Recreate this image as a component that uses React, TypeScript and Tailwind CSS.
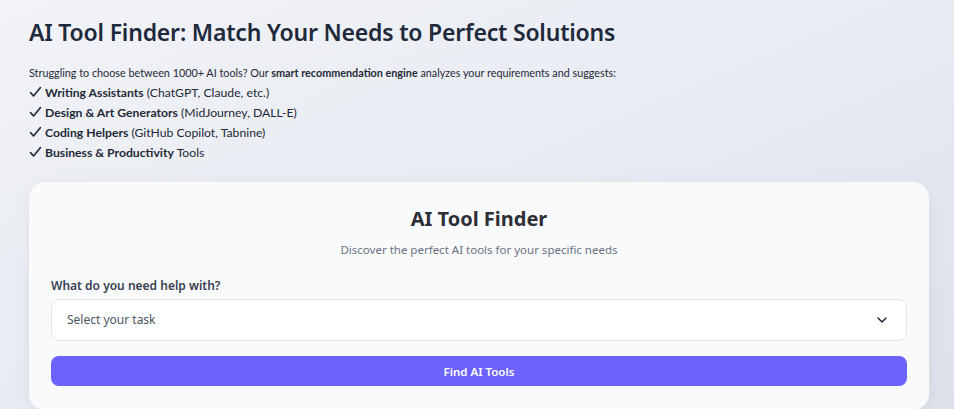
import { ChevronDown } from 'lucide-react'

const ITEMS = [
  { bold: 'Writing Assistants', rest: ' (ChatGPT, Claude, etc.)' },
  { bold: 'Design & Art Generators', rest: ' (MidJourney, DALL-E)' },
  { bold: 'Coding Helpers', rest: ' (GitHub Copilot, Tabnine)' },
  { bold: 'Business & Productivity', rest: ' Tools' },
]

function Check() {
  return (
    <svg width="13" height="12" viewBox="0 0 13 12" fill="none" className="mr-[3px] inline-block align-[-1px]">
      <path d="M1.5 6.5 4.5 10 11.5 1.5" stroke="#1f2937" strokeWidth="1.6" strokeLinecap="round" strokeLinejoin="round" />
    </svg>
  )
}

export default function App() {
  return (
    <div
      className="min-h-screen w-full bg-gradient-to-br from-[#f1f3f7] via-[#e8ebf2] to-[#dce1eb] px-[29px] pt-[16px] text-[#1f2937]"
      style={{ fontFamily: '"Noto Sans", "Open Sans", sans-serif' }}
    >
      <h1 className="text-[23px] font-semibold leading-8 tracking-[-0.2px] text-[#1e293b]">
        AI Tool Finder: Match Your Needs to Perfect Solutions
      </h1>

      <div className="mt-[15px] text-[10.8px] leading-5 text-[#1f2937]" style={{ fontFamily: 'Lato, "Noto Sans", sans-serif' }}>
        <p>
          Struggling to choose between 1000+ AI tools? Our <strong className="font-bold">smart recommendation engine</strong>{' '}
          analyzes your requirements and suggests:
        </p>
        {ITEMS.map((it) => (
          <p key={it.bold} className="text-[12.2px]">
            <Check />
            <strong className="font-bold">{it.bold}</strong>
            {it.rest}
          </p>
        ))}
      </div>

      <div className="mt-[19px] w-[900px] rounded-2xl bg-[#f9fafc] px-[22px] pt-[23px] pb-6 shadow-[0_4px_20px_rgba(15,23,42,0.06)]">
        <h2 className="text-center text-xl font-bold leading-7 text-[#2d2f36]">AI Tool Finder</h2>
        <p className="mt-[8px] text-center text-[11.5px] text-[#6b7280]">Discover the perfect AI tools for your specific needs</p>

        <label className="mt-[20px] block text-xs font-semibold text-[#374151]">What do you need help with?</label>
        <div className="mt-[5px] flex h-[42px] items-center justify-between rounded-lg border border-[#e5e7eb] bg-white pl-[15px] pr-4 text-[12px] text-[#4b5563]">
          <span>Select your task</span>
          <ChevronDown className="h-4 w-4 text-[#111827]" strokeWidth={2} />
        </div>

        <button className="mt-[15px] flex h-[30px] w-full items-center justify-center rounded-lg bg-[#6c63ff] text-[11.5px] font-semibold text-white">
          Find AI Tools
        </button>
      </div>
    </div>
  )
}
